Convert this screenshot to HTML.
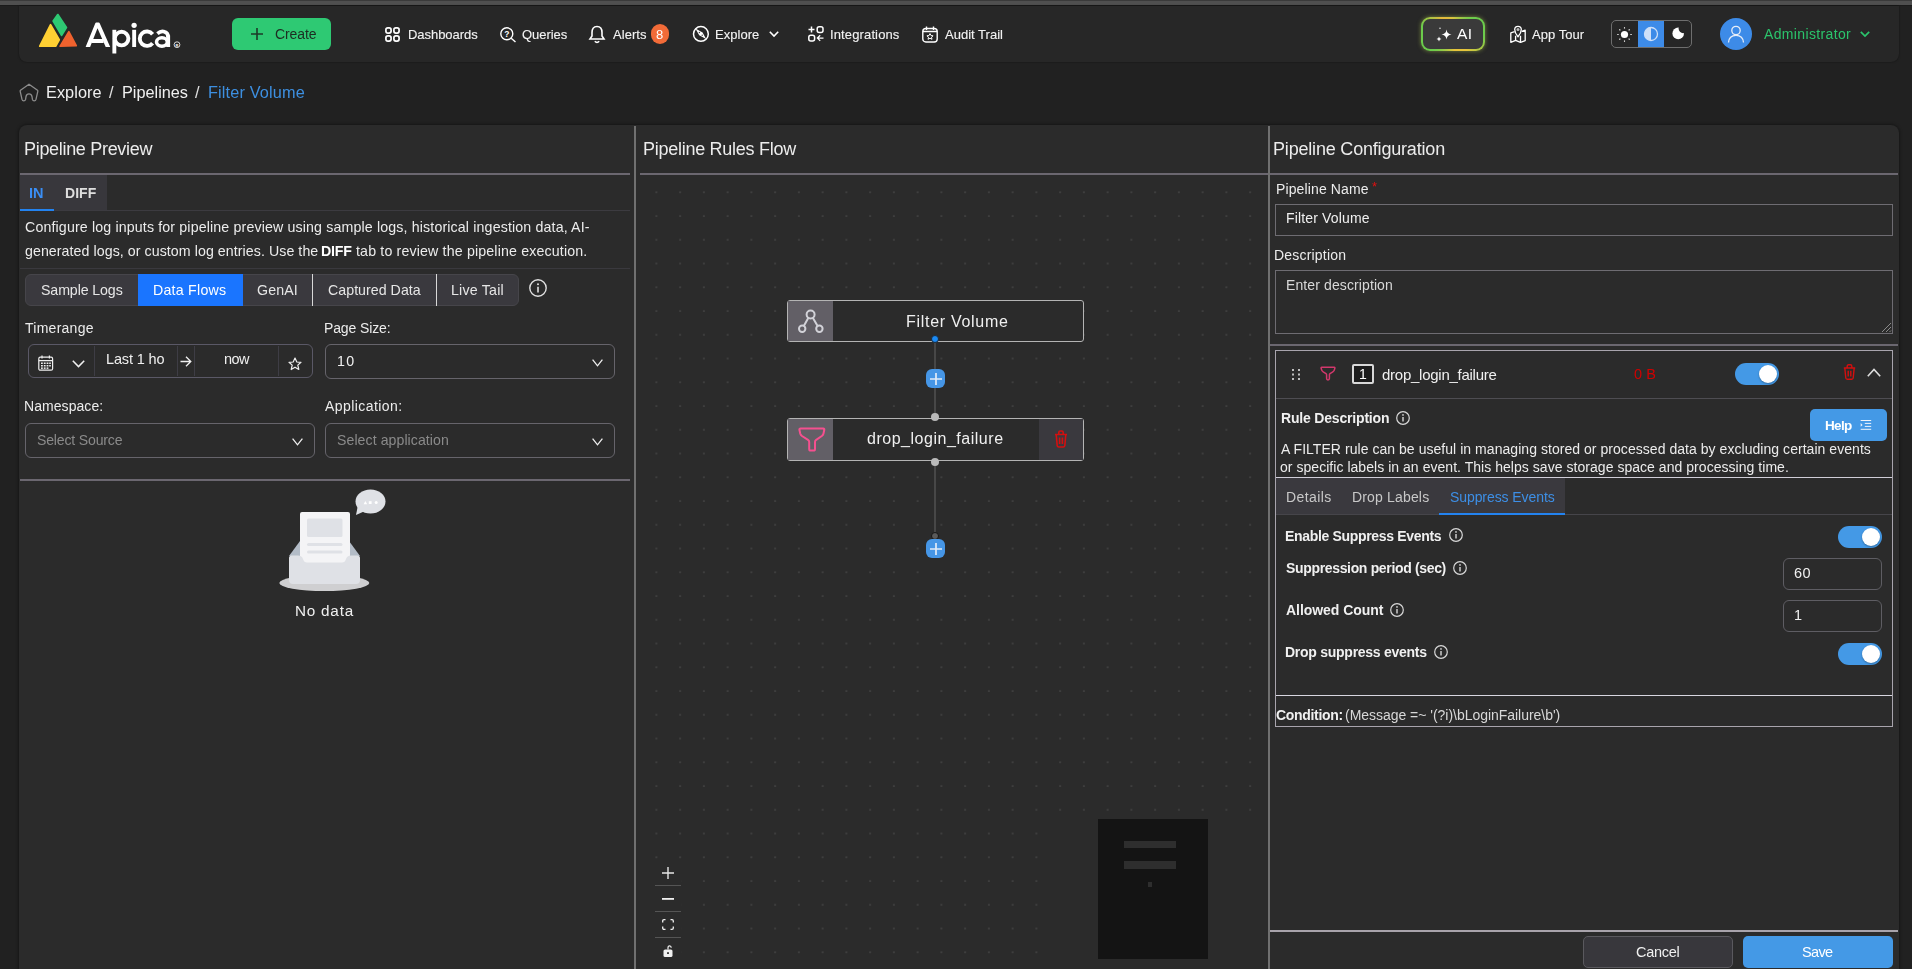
<!DOCTYPE html>
<html><head><meta charset="utf-8"><title>Apica - Pipeline</title>
<style>
html,body{margin:0;padding:0;width:1912px;height:969px;overflow:hidden;background:#212121;}
body{position:relative;font-family:'Liberation Sans', sans-serif;-webkit-font-smoothing:antialiased;}
svg{display:block}
</style></head><body>
<div style="position:absolute;left:0px;top:0px;width:1912px;height:1px;background:#3a3a3a;"></div>
<div style="position:absolute;left:0px;top:1px;width:1912px;height:4px;background:#4f4f4f;"></div>
<div style="position:absolute;left:0px;top:5px;width:1912px;height:1px;background:#1a1a1a;"></div>
<div style="position:absolute;left:19px;top:6px;width:1880px;height:56px;background:#272727;border-radius:0 0 8px 8px;box-shadow:0 0 2px rgba(0,0,0,0.5);"></div>
<svg style="position:absolute;left:38px;top:13px;overflow:visible;" width="40" height="35" viewBox="0 0 40 35">
<path d="M19.8 1.6 L28.4 14.6 L23.6 22.4 L15.2 8 Z" fill="#2ec973" stroke="#2ec973" stroke-width="1.8" stroke-linejoin="round"/>
<path d="M12.5 11.8 L21.2 26.8 L17.6 33.2 L1.8 33.2 Z" fill="#ffd033" stroke="#ffd033" stroke-width="1.8" stroke-linejoin="round"/>
<path d="M30.9 18.8 L38.2 32.6 L22.2 33.2 Z" fill="#f0622e" stroke="#f0622e" stroke-width="1.8" stroke-linejoin="round"/>
</svg>
<svg style="position:absolute;left:80px;top:15px;overflow:visible;" width="105" height="42" viewBox="0 0 105 42">
<g fill="#ffffff" transform="translate(-80,-15)">
<path d="M85.6 47 L95.3 23.2 Q95.6 22.6 96.3 22.6 L98.7 22.6 Q99.4 22.6 99.7 23.2 L110.2 47 L105.7 47 L97.5 28.2 L90.1 47 Z"/>
<rect x="91.6" y="39" width="12" height="4"/>
<rect x="112.4" y="29.8" width="3.9" height="23.7"/>
<rect x="132.2" y="29.8" width="3.9" height="17.2"/>
<circle cx="134.1" cy="25.3" r="2.65"/>
<rect x="166.2" y="35.5" width="3.9" height="11.5"/>
</g>
<g fill="none" stroke="#ffffff" stroke-width="3.9" transform="translate(-80,-15)">
<circle cx="121.6" cy="38.6" r="6.8"/>
<path d="M152.6 34.2 A7.2 7.2 0 1 0 152.6 43.2"/>
<ellipse cx="161.9" cy="42" rx="5.4" ry="4.2" stroke-width="3.5"/>
<path d="M157.4 33.6 Q161 30.6 164.4 31.8 Q168.2 33 168.2 37.2" stroke-width="3.7"/>
<circle cx="177" cy="44.7" r="2.9" stroke-width="0.8"/>
</g>
<text x="97" y="31.6" font-size="4" font-weight="700" fill="#fff" text-anchor="middle" font-family="Liberation Sans">R</text>
</svg>
<div style="position:absolute;left:232px;top:18px;width:99px;height:32px;background:#2ec973;border-radius:6px;"></div>
<svg style="position:absolute;left:251px;top:28px;overflow:visible;" width="12" height="12" viewBox="0 0 12 12"><path d="M6 0V12M0 6H12" stroke="#1c3a28" stroke-width="1.6"/></svg>
<div style="position:absolute;left:274.90px;top:27.45px;white-space:pre;will-change:transform;font-size:14px;line-height:14px;letter-spacing:-0.083px;color:#1d2d22;font-weight:400;">Create</div>
<svg style="position:absolute;left:385px;top:27px;overflow:visible;" width="15" height="15" viewBox="0 0 15 15"><g fill="none" stroke="#fff" stroke-width="1.7"><rect x="0.9" y="0.9" width="5.2" height="5.2" rx="2"/><rect x="8.9" y="0.9" width="5.2" height="5.2" rx="2"/><rect x="0.9" y="8.9" width="5.2" height="5.2" rx="2"/><rect x="8.9" y="8.9" width="5.2" height="5.2" rx="2"/></g></svg>
<div style="position:absolute;left:407.76px;top:28.30px;white-space:pre;will-change:transform;font-size:13px;line-height:13px;letter-spacing:-0.052px;color:#f2f2f2;font-weight:400;-webkit-text-stroke:0.12px #f2f2f2;">Dashboards</div>
<svg style="position:absolute;left:500px;top:27px;overflow:visible;" width="16" height="15" viewBox="0 0 16 15"><g fill="none" stroke="#fff" stroke-width="1.4"><circle cx="6.8" cy="6.8" r="6"/><path d="M11.2 11.2L15.5 15"/></g><text x="6.8" y="9.6" font-size="8.5" font-weight="700" fill="#fff" text-anchor="middle" font-family="Liberation Sans">?</text></svg>
<div style="position:absolute;left:522.08px;top:28.30px;white-space:pre;will-change:transform;font-size:13px;line-height:13px;letter-spacing:-0.035px;color:#f2f2f2;font-weight:400;-webkit-text-stroke:0.12px #f2f2f2;">Queries</div>
<svg style="position:absolute;left:589px;top:25px;overflow:visible;" width="16" height="19" viewBox="0 0 16 19"><g fill="none" stroke="#fff" stroke-width="1.6"><path d="M8 1.5C4.5 1.5 3 4 3 7.5V11L1 14H15L13 11V7.5C13 4 11.5 1.5 8 1.5Z"/><path d="M5.8 16.2Q8 18.6 10.2 16.2"/></g></svg>
<div style="position:absolute;left:612.70px;top:28.30px;white-space:pre;will-change:transform;font-size:13px;line-height:13px;letter-spacing:0.052px;color:#f2f2f2;font-weight:400;-webkit-text-stroke:0.12px #f2f2f2;">Alerts</div>
<div style="position:absolute;left:651px;top:24px;width:18px;height:20px;background:#f26b38;border-radius:10px;"></div>
<div style="position:absolute;left:655.98px;top:28.00px;white-space:pre;will-change:transform;font-size:13px;line-height:13px;letter-spacing:0.000px;color:#ffffff;font-weight:400;">8</div>
<svg style="position:absolute;left:692px;top:25px;overflow:visible;" width="18" height="18" viewBox="0 0 18 18"><circle cx="8.9" cy="8.9" r="7.4" fill="none" stroke="#fff" stroke-width="1.5"/><path d="M3.4 3.6L10.6 7.4L14.1 13.9L7.2 10.2Z" fill="#fff"/><circle cx="7.4" cy="7.5" r="0.7" fill="#444"/><circle cx="10.2" cy="10.3" r="0.7" fill="#444"/></svg>
<div style="position:absolute;left:715.16px;top:28.30px;white-space:pre;will-change:transform;font-size:13px;line-height:13px;letter-spacing:0.039px;color:#f2f2f2;font-weight:400;-webkit-text-stroke:0.12px #f2f2f2;">Explore</div>
<svg style="position:absolute;left:769px;top:31px;overflow:visible;" width="10" height="6" viewBox="0 0 10 6"><path d="M0.8 0.8L5 5L9.2 0.8" fill="none" stroke="#fff" stroke-width="1.6"/></svg>
<svg style="position:absolute;left:808px;top:26px;overflow:visible;" width="16" height="16" viewBox="0 0 16 16"><g fill="none" stroke="#fff" stroke-width="1.5"><path d="M3.5 0.5V6.5M0.5 3.5H6.5"/><rect x="9.2" y="0.8" width="5.8" height="5.8" rx="2"/><rect x="0.8" y="9.2" width="5.8" height="5.8" rx="2"/><path d="M15.5 12.1H9.4M12.2 9.3L9.4 12.1L12.2 14.9" stroke-width="1.3"/></g></svg>
<div style="position:absolute;left:830.23px;top:28.30px;white-space:pre;will-change:transform;font-size:13px;line-height:13px;letter-spacing:0.130px;color:#f2f2f2;font-weight:400;-webkit-text-stroke:0.12px #f2f2f2;">Integrations</div>
<svg style="position:absolute;left:922px;top:26px;overflow:visible;" width="16" height="17" viewBox="0 0 16 17"><g fill="none" stroke="#fff" stroke-width="1.4"><rect x="0.8" y="2.5" width="14.4" height="13.5" rx="3"/><path d="M4.5 0.5V4M11.5 0.5V4M0.8 5.5H15.2"/></g><path d="M8 7.6L9 9.6L11.1 9.8L9.5 11.2L10 13.3L8 12.2L6 13.3L6.5 11.2L4.9 9.8L7 9.6Z" fill="none" stroke="#fff" stroke-width="1"/></svg>
<div style="position:absolute;left:945.00px;top:28.30px;white-space:pre;will-change:transform;font-size:13px;line-height:13px;letter-spacing:0.017px;color:#f2f2f2;font-weight:400;-webkit-text-stroke:0.12px #f2f2f2;">Audit Trail</div>
<div style="position:absolute;left:1421px;top:17px;width:64px;height:34px;border-radius:9px;background:conic-gradient(from 0deg,#d8c440 0deg,#6ccc4c 50deg,#6ccc4c 95deg,#e6c43c 140deg,#e6c43c 175deg,#6ccc4c 230deg,#6ccc4c 285deg,#e6b83c 325deg,#d8c440 360deg);box-shadow:0 0 4px rgba(180,210,80,0.55);"></div>
<div style="position:absolute;left:1423px;top:19px;width:60px;height:30px;background:#3a3a3a;border-radius:7px;"></div>
<svg style="position:absolute;left:1436px;top:27px;overflow:visible;" width="17" height="15" viewBox="0 0 17 15"><path d="M10.5 2.5Q11 7 15.5 7.5Q11 8 10.5 12.5Q10 8 5.5 7.5Q10 7 10.5 2.5Z" fill="#fff"/><path d="M3 9.5Q3.3 11.7 5.5 12Q3.3 12.3 3 14.5Q2.7 12.3 0.5 12Q2.7 11.7 3 9.5Z" fill="#fff"/><circle cx="4" cy="1.2" r="0.7" fill="#fff"/></svg>
<div style="position:absolute;left:1456.80px;top:25.88px;white-space:pre;will-change:transform;font-size:15.5px;line-height:15.5px;letter-spacing:0.317px;color:#ffffff;font-weight:400;">AI</div>
<svg style="position:absolute;left:1510px;top:25px;overflow:visible;" width="16" height="18" viewBox="0 0 16 18"><g fill="none" stroke="#fff" stroke-width="1.3" stroke-linejoin="round"><path d="M4.6 6.6L0.8 7.9V17.3L5.6 15.4L10.5 17.4L15.2 15.6V5.2L11.6 6.4"/><path d="M5.6 10.8V15.4M10.5 10.8V17.4"/><path d="M8 11.8Q4.7 8 4.7 4.6A3.3 3.3 0 0 1 11.3 4.6Q11.3 8 8 11.8Z"/></g><circle cx="8" cy="4.6" r="1.5" fill="#bbb"/></svg>
<div style="position:absolute;left:1532.40px;top:28.00px;white-space:pre;will-change:transform;font-size:13px;line-height:13px;letter-spacing:0.034px;color:#f2f2f2;font-weight:400;-webkit-text-stroke:0.12px #f2f2f2;">App Tour</div>
<div style="position:absolute;left:1611px;top:20px;width:81px;height:28px;border:1px solid #6e6e6e;border-radius:5px;box-sizing:border-box;background:#262626;"></div>
<div style="position:absolute;left:1638px;top:21px;width:26px;height:26px;background:#3d8be8;"></div>
<svg style="position:absolute;left:1617px;top:27px;overflow:visible;" width="15" height="15" viewBox="0 0 15 15"><circle cx="7.5" cy="7.5" r="3.6" fill="#fff"/><g stroke="#fff" stroke-width="1.1"><path d="M7.5 0.3V1.6M7.5 13.4V14.7M0.3 7.5H1.6M13.4 7.5H14.7M2.4 2.4L3.3 3.3M11.7 11.7L12.6 12.6M2.4 12.6L3.3 11.7M11.7 3.3L12.6 2.4"/></g></svg>
<svg style="position:absolute;left:1643px;top:26px;overflow:visible;" width="16" height="16" viewBox="0 0 16 16"><circle cx="8" cy="8" r="6.5" fill="none" stroke="#cfe0f8" stroke-width="1.3"/><path d="M8 1.5A6.5 6.5 0 0 0 8 14.5Z" fill="#cfe0f8"/></svg>
<svg style="position:absolute;left:1672px;top:27px;overflow:visible;" width="13" height="13" viewBox="0 0 13 13"><defs><mask id="mm"><rect x="-1" y="-1" width="15" height="15" fill="#fff"/><circle cx="11.2" cy="1.6" r="4.6" fill="#000"/></mask></defs><circle cx="6.2" cy="6.4" r="5.8" fill="#fff" mask="url(#mm)"/></svg>
<div style="position:absolute;left:1720px;top:18px;width:32px;height:32px;background:#3d8be8;border-radius:50%;"></div>
<svg style="position:absolute;left:1727px;top:25px;overflow:visible;" width="18" height="18" viewBox="0 0 18 18"><g fill="none" stroke="#e8eef8" stroke-width="1.3"><circle cx="9" cy="5.5" r="4.2"/><path d="M1.5 17.5Q2 10.3 9 10.3Q16 10.3 16.5 17.5"/></g></svg>
<div style="position:absolute;left:1764.00px;top:27.15px;white-space:pre;will-change:transform;font-size:14px;line-height:14px;letter-spacing:0.359px;color:#2bc46c;font-weight:400;">Administrator</div>
<svg style="position:absolute;left:1860px;top:31px;overflow:visible;" width="10" height="6" viewBox="0 0 10 6"><path d="M0.8 0.8L5 5L9.2 0.8" fill="none" stroke="#2bc46c" stroke-width="1.7"/></svg>
<svg style="position:absolute;left:19px;top:83px;overflow:visible;" width="20" height="19" viewBox="0 0 20 19"><path d="M10 1.2L18.5 7.2Q19 7.6 18.8 8.4L17 16.4Q16.6 17.8 15.2 17.8Q13.8 17.8 13.4 16.4L13 13.5Q12.4 10.8 10 10.8Q7.6 10.8 7 13.5L6.6 16.4Q6.2 17.8 4.8 17.8Q3.4 17.8 3 16.4L1.2 8.4Q1 7.6 1.5 7.2Z" fill="none" stroke="#8c8c8c" stroke-width="1.3"/></svg>
<div style="position:absolute;left:46.30px;top:84.40px;white-space:pre;will-change:transform;font-size:16.3px;line-height:16.3px;letter-spacing:0.054px;color:#f0f0f0;font-weight:400;">Explore</div>
<div style="position:absolute;left:109.00px;top:84.40px;white-space:pre;will-change:transform;font-size:16.3px;line-height:16.3px;letter-spacing:0.000px;color:#e0e0e0;font-weight:400;">/</div>
<div style="position:absolute;left:121.70px;top:84.40px;white-space:pre;will-change:transform;font-size:16.3px;line-height:16.3px;letter-spacing:-0.007px;color:#f0f0f0;font-weight:400;">Pipelines</div>
<div style="position:absolute;left:195.00px;top:84.40px;white-space:pre;will-change:transform;font-size:16.3px;line-height:16.3px;letter-spacing:0.000px;color:#e0e0e0;font-weight:400;">/</div>
<div style="position:absolute;left:207.50px;top:84.40px;white-space:pre;will-change:transform;font-size:16.3px;line-height:16.3px;letter-spacing:0.140px;color:#3d8fe0;font-weight:400;">Filter Volume</div>
<div style="position:absolute;left:19px;top:125px;width:1880px;height:844px;background:#2b2b2b;border-radius:8px 8px 0 0;box-shadow:0 0 3px 1px rgba(0,0,0,0.35);"></div>
<div style="position:absolute;left:23.86px;top:139.86px;white-space:pre;will-change:transform;font-size:18px;line-height:18px;letter-spacing:-0.311px;color:#ececec;font-weight:400;">Pipeline Preview</div>
<div style="position:absolute;left:20px;top:173px;width:610px;height:2px;background:#6b6770;"></div>
<div style="position:absolute;left:634px;top:126px;width:2px;height:843px;background:#707070;"></div>
<div style="position:absolute;left:20px;top:175px;width:87px;height:35px;background:#38373c;"></div>
<div style="position:absolute;left:20px;top:210px;width:610px;height:1px;background:#3c3b40;"></div>
<div style="position:absolute;left:20px;top:209px;width:34px;height:2px;background:#2383f0;"></div>
<div style="position:absolute;left:29.43px;top:186.03px;white-space:pre;will-change:transform;font-size:14.5px;line-height:14.5px;letter-spacing:0.000px;color:#3a8ef5;font-weight:700;">IN</div>
<div style="position:absolute;left:65.16px;top:186.45px;white-space:pre;will-change:transform;font-size:14px;line-height:14px;letter-spacing:0.056px;color:#dedede;font-weight:700;">DIFF</div>
<div style="position:absolute;left:24.69px;top:219.78px;white-space:pre;will-change:transform;font-size:14.2px;line-height:14.2px;letter-spacing:0.147px;color:#ececec;font-weight:400;">Configure log inputs for pipeline preview using sample logs, historical ingestion data, AI-</div>
<div style="position:absolute;left:24.83px;top:243.98px;white-space:pre;will-change:transform;font-size:14.2px;line-height:14.2px;letter-spacing:0.067px;color:#ececec;font-weight:400;">generated logs, or custom log entries. Use the</div>
<div style="position:absolute;left:321.35px;top:243.98px;white-space:pre;will-change:transform;font-size:14.2px;line-height:14.2px;letter-spacing:-0.186px;color:#ffffff;font-weight:700;">DIFF</div>
<div style="position:absolute;left:356.36px;top:243.98px;white-space:pre;will-change:transform;font-size:14.2px;line-height:14.2px;letter-spacing:0.159px;color:#ececec;font-weight:400;">tab to review the pipeline execution.</div>
<div style="position:absolute;left:20px;top:268px;width:610px;height:1px;background:#3a393e;"></div>
<div style="position:absolute;left:25px;top:274px;width:494px;height:32px;background:#3a393e;border-radius:6px;border:1px solid #46454a;box-sizing:border-box;"></div>
<div style="position:absolute;left:138px;top:274px;width:105px;height:32px;background:#1a75ff;"></div>
<div style="position:absolute;left:312px;top:274px;width:1px;height:32px;background:#d8d8d8;"></div>
<div style="position:absolute;left:436px;top:274px;width:1px;height:32px;background:#d8d8d8;"></div>
<div style="position:absolute;left:41.03px;top:283.38px;white-space:pre;will-change:transform;font-size:14.2px;line-height:14.2px;letter-spacing:-0.109px;color:#e6e6e6;font-weight:400;">Sample Logs</div>
<div style="position:absolute;left:153.46px;top:283.38px;white-space:pre;will-change:transform;font-size:14.2px;line-height:14.2px;letter-spacing:0.238px;color:#ffffff;font-weight:400;">Data Flows</div>
<div style="position:absolute;left:257.29px;top:283.38px;white-space:pre;will-change:transform;font-size:14.2px;line-height:14.2px;letter-spacing:0.125px;color:#e6e6e6;font-weight:400;">GenAI</div>
<div style="position:absolute;left:327.69px;top:283.38px;white-space:pre;will-change:transform;font-size:14.2px;line-height:14.2px;letter-spacing:0.033px;color:#e6e6e6;font-weight:400;">Captured Data</div>
<div style="position:absolute;left:450.86px;top:283.38px;white-space:pre;will-change:transform;font-size:14.2px;line-height:14.2px;letter-spacing:0.215px;color:#e6e6e6;font-weight:400;">Live Tail</div>
<svg style="position:absolute;left:529px;top:279px;overflow:visible;" width="18" height="18" viewBox="0 0 18 18"><circle cx="9" cy="9" r="8.2" fill="none" stroke="#e0e0e0" stroke-width="1.4"/><path d="M9 7.8V13.4" stroke="#e0e0e0" stroke-width="1.6"/><circle cx="9" cy="5.2" r="1" fill="#e0e0e0"/></svg>
<div style="position:absolute;left:25.12px;top:320.75px;white-space:pre;will-change:transform;font-size:14px;line-height:14px;letter-spacing:0.261px;color:#ececec;font-weight:400;">Timerange</div>
<div style="position:absolute;left:28px;top:344px;width:285px;height:34px;border:1px solid #5a5866;border-radius:6px;box-sizing:border-box;"></div>
<div style="position:absolute;left:94px;top:346px;width:1px;height:30px;background:#3e3d45;"></div>
<div style="position:absolute;left:177px;top:346px;width:1px;height:30px;background:#3e3d45;"></div>
<div style="position:absolute;left:194px;top:346px;width:1px;height:30px;background:#3e3d45;"></div>
<div style="position:absolute;left:278px;top:346px;width:1px;height:30px;background:#3e3d45;"></div>
<svg style="position:absolute;left:38px;top:355px;overflow:visible;" width="16" height="16" viewBox="0 0 16 16"><g fill="none" stroke="#f0f0f0" stroke-width="1.2"><rect x="0.8" y="2.2" width="13.8" height="13" rx="1.5"/><path d="M0.8 5.6H14.6M4 0.5V3.5M11.4 0.5V3.5"/></g><g fill="#f0f0f0"><rect x="3" y="7.5" width="1.8" height="1.5"/><rect x="5.8" y="7.5" width="1.8" height="1.5"/><rect x="8.6" y="7.5" width="1.8" height="1.5"/><rect x="11.2" y="7.5" width="1.6" height="1.5"/><rect x="3" y="10" width="1.8" height="1.5"/><rect x="5.8" y="10" width="1.8" height="1.5"/><rect x="8.6" y="10" width="1.8" height="1.5"/><rect x="11.2" y="10" width="1.6" height="1.5"/><rect x="3" y="12.4" width="1.8" height="1.5"/><rect x="5.8" y="12.4" width="1.8" height="1.5"/><rect x="8.6" y="12.4" width="1.8" height="1.5"/></g></svg>
<svg style="position:absolute;left:72px;top:360px;overflow:visible;" width="13" height="8" viewBox="0 0 13 8"><path d="M0.8 0.8L6.5 6.6L12.2 0.8" fill="none" stroke="#f0f0f0" stroke-width="1.5"/></svg>
<div style="position:absolute;left:106.24px;top:351.63px;white-space:pre;will-change:transform;font-size:14.5px;line-height:14.5px;letter-spacing:-0.134px;color:#f0f0f0;font-weight:400;">Last 1 ho</div>
<svg style="position:absolute;left:180px;top:356px;overflow:visible;" width="12" height="11" viewBox="0 0 12 11"><path d="M0.5 5.5H10.8M6 0.8L10.8 5.5L6 10.2" fill="none" stroke="#f0f0f0" stroke-width="1.3"/></svg>
<div style="position:absolute;left:223.63px;top:351.63px;white-space:pre;will-change:transform;font-size:14.5px;line-height:14.5px;letter-spacing:-0.622px;color:#f0f0f0;font-weight:400;">now</div>
<svg style="position:absolute;left:288px;top:357px;overflow:visible;" width="14" height="14" viewBox="0 0 14 14"><path d="M7 1L8.8 5L13 5.3L9.8 8.1L10.8 12.5L7 10.2L3.2 12.5L4.2 8.1L1 5.3L5.2 5Z" fill="none" stroke="#f0f0f0" stroke-width="1.2" stroke-linejoin="round"/></svg>
<div style="position:absolute;left:324.28px;top:320.75px;white-space:pre;will-change:transform;font-size:14px;line-height:14px;letter-spacing:-0.129px;color:#ececec;font-weight:400;">Page Size:</div>
<div style="position:absolute;left:325px;top:344px;width:290px;height:35px;border:1px solid #66646b;border-radius:6px;box-sizing:border-box;"></div>
<div style="position:absolute;left:336.71px;top:353.98px;white-space:pre;will-change:transform;font-size:14.2px;line-height:14.2px;letter-spacing:1.313px;color:#f0f0f0;font-weight:400;">10</div>
<svg style="position:absolute;left:592px;top:359px;overflow:visible;" width="11" height="8" viewBox="0 0 11 8"><path d="M0.6 0.6L5.5 6.8L10.4 0.6" fill="none" stroke="#f0f0f0" stroke-width="1.3"/></svg>
<div style="position:absolute;left:24.28px;top:399.15px;white-space:pre;will-change:transform;font-size:14px;line-height:14px;letter-spacing:0.062px;color:#ececec;font-weight:400;">Namespace:</div>
<div style="position:absolute;left:25px;top:423px;width:290px;height:35px;border:1px solid #66646b;border-radius:6px;box-sizing:border-box;"></div>
<div style="position:absolute;left:36.84px;top:432.96px;white-space:pre;will-change:transform;font-size:14.1px;line-height:14.1px;letter-spacing:-0.184px;color:#8a8a8a;font-weight:400;">Select Source</div>
<svg style="position:absolute;left:292px;top:438px;overflow:visible;" width="11" height="8" viewBox="0 0 11 8"><path d="M0.6 0.6L5.5 6.8L10.4 0.6" fill="none" stroke="#f0f0f0" stroke-width="1.3"/></svg>
<div style="position:absolute;left:325.40px;top:399.15px;white-space:pre;will-change:transform;font-size:14px;line-height:14px;letter-spacing:0.432px;color:#ececec;font-weight:400;">Application:</div>
<div style="position:absolute;left:325px;top:423px;width:290px;height:35px;border:1px solid #66646b;border-radius:6px;box-sizing:border-box;"></div>
<div style="position:absolute;left:336.84px;top:432.96px;white-space:pre;will-change:transform;font-size:14.1px;line-height:14.1px;letter-spacing:0.079px;color:#8a8a8a;font-weight:400;">Select application</div>
<svg style="position:absolute;left:592px;top:438px;overflow:visible;" width="11" height="8" viewBox="0 0 11 8"><path d="M0.6 0.6L5.5 6.8L10.4 0.6" fill="none" stroke="#f0f0f0" stroke-width="1.3"/></svg>
<div style="position:absolute;left:20px;top:479px;width:610px;height:2px;background:#6b6770;"></div>
<svg style="position:absolute;left:279px;top:490px;overflow:visible;" width="108" height="102" viewBox="0 0 108 102">
<ellipse cx="45.3" cy="93" rx="45" ry="8" fill="#cfcfd1"/>
<path d="M10 66 L21 51 L70 51 L81 66 Z" fill="#b3bcc7"/>
<rect x="21" y="22" width="50" height="52" rx="2" fill="#f4f4f6"/>
<rect x="28" y="28.5" width="35.5" height="18.5" rx="1.5" fill="#dfe1e6"/>
<rect x="28" y="53" width="35.5" height="3" rx="1.5" fill="#dfe1e6"/>
<rect x="28" y="60.5" width="35.5" height="3" rx="1.5" fill="#dfe1e6"/>
<path d="M10 68 Q10 65.5 12.5 65.5 L19 65.5 Q23 65.5 24 69 Q25 72.5 28 72.5 L63 72.5 Q66 72.5 67 69 Q68 65.5 72 65.5 L78.5 65.5 Q81 65.5 81 68 L81 90 Q81 94 77 94 L14 94 Q10 94 10 90 Z" fill="#dfe1e6"/>
<ellipse cx="91.5" cy="11.5" rx="15" ry="12" fill="#dfe1e6"/>
<path d="M79 15 L77 25 L86 21 Z" fill="#dfe1e6"/>
<path d="M84.6 14.2 L86.4 11 L88.2 14.2 Z" fill="#ffffff"/>
<rect x="89.8" y="11.2" width="2.8" height="2.8" fill="#ffffff"/>
<circle cx="97.2" cy="12.6" r="1.5" fill="#ffffff"/>
</svg>
<div style="position:absolute;left:294.78px;top:602.65px;white-space:pre;will-change:transform;font-size:15.3px;line-height:15.3px;letter-spacing:0.763px;color:#f0f0f0;font-weight:400;">No data</div>
<div style="position:absolute;left:643.46px;top:139.86px;white-space:pre;will-change:transform;font-size:18px;line-height:18px;letter-spacing:-0.271px;color:#ececec;font-weight:400;">Pipeline Rules Flow</div>
<div style="position:absolute;left:640px;top:173px;width:628px;height:2px;background:#6b6770;"></div>
<svg style="position:absolute;left:636px;top:175px;" width="632" height="794"><defs><pattern id="dots" x="8.52" y="5.32" width="23.75" height="23.75" patternUnits="userSpaceOnUse"><circle cx="11.875" cy="11.875" r="0.6" fill="#777777"/></pattern></defs><rect width="632" height="794" fill="url(#dots)"/></svg>
<div style="position:absolute;left:1053px;top:813px;width:215px;height:156px;background:#2b2b2b;"></div>
<div style="position:absolute;left:1098px;top:819px;width:110px;height:140px;background:#141414;"></div>
<div style="position:absolute;left:1124px;top:840.5px;width:52px;height:7.5px;background:#2e2e2e;"></div>
<div style="position:absolute;left:1124px;top:861px;width:52px;height:7.7px;background:#2e2e2e;"></div>
<div style="position:absolute;left:1147.6px;top:882px;width:4.7px;height:4.5px;background:#2e2e2e;"></div>
<div style="position:absolute;left:655px;top:860px;width:26px;height:104px;background:#2b2b2b;"></div>
<div style="position:absolute;left:655px;top:885px;width:26px;height:1px;background:#555;"></div>
<div style="position:absolute;left:655px;top:911px;width:26px;height:1px;background:#555;"></div>
<div style="position:absolute;left:655px;top:937px;width:26px;height:1px;background:#555;"></div>
<svg style="position:absolute;left:662px;top:867px;overflow:visible;" width="12" height="12" viewBox="0 0 12 12"><path d="M6 0V12M0 6H12" stroke="#e6e6e6" stroke-width="1.4"/></svg>
<svg style="position:absolute;left:662px;top:898px;overflow:visible;" width="12" height="2" viewBox="0 0 12 2"><rect x="0" y="0" width="12" height="1.8" fill="#f0f0f0"/></svg>
<svg style="position:absolute;left:662px;top:919px;overflow:visible;" width="12" height="11" viewBox="0 0 12 11"><g fill="none" stroke="#f0f0f0" stroke-width="1.3"><path d="M0.7 3.5V2Q0.7 0.7 2 0.7H3.5M8.5 0.7H10Q11.3 0.7 11.3 2V3.5M11.3 7.5V9Q11.3 10.3 10 10.3H8.5M3.5 10.3H2Q0.7 10.3 0.7 9V7.5"/></g></svg>
<svg style="position:absolute;left:663px;top:945px;overflow:visible;" width="10" height="12" viewBox="0 0 10 12"><path d="M5 4.5V2.8Q5 0.8 6.6 0.8Q8.2 0.8 8.2 2.8" fill="none" stroke="#f0f0f0" stroke-width="1.2"/><rect x="0.5" y="4.5" width="9" height="7.5" rx="1.6" fill="#f0f0f0"/><rect x="4.1" y="7.2" width="1.8" height="1.8" fill="#2b2b2b"/></svg>
<div style="position:absolute;left:934.4px;top:340px;width:2px;height:78px;background:#474747;"></div>
<div style="position:absolute;left:934.4px;top:462px;width:2px;height:78px;background:#474747;"></div>
<div style="position:absolute;left:787px;top:300px;width:297px;height:42px;background:#2b2b2b;border:1px solid #b4b4b4;border-radius:3px;box-sizing:border-box;"></div>
<div style="position:absolute;left:788px;top:301px;width:45px;height:40px;background:#625f66;"></div>
<svg style="position:absolute;left:798px;top:306px;overflow:visible;" width="26" height="27" viewBox="0 0 26 27"><g fill="none" stroke="#d2d2d8" stroke-width="2"><circle cx="12.6" cy="8.5" r="4"/><circle cx="4.2" cy="22.8" r="3.2"/><circle cx="21.4" cy="22.8" r="3.2"/><path d="M10.4 11.8L5.8 20M14.8 11.8L19.6 20"/></g></svg>
<div style="position:absolute;left:905.92px;top:313.56px;white-space:pre;will-change:transform;font-size:16px;line-height:16px;letter-spacing:0.708px;color:#f0f0f0;font-weight:400;">Filter Volume</div>
<div style="position:absolute;left:931px;top:334.8px;width:8px;height:8px;border-radius:50%;background:#1a8af5;border:1px solid #1b2a3a;box-sizing:border-box;"></div>
<div style="position:absolute;left:926px;top:369px;width:19px;height:19px;background:#4696e6;border-radius:6px;"></div>
<svg style="position:absolute;left:929.5px;top:372.5px;overflow:visible;" width="12" height="12" viewBox="0 0 12 12"><path d="M6 0V12M0 6H12" stroke="#e2ecf7" stroke-width="1.7"/></svg>
<div style="position:absolute;left:787px;top:418px;width:297px;height:43px;background:#2b2b2b;border:1px solid #b4b4b4;border-radius:3px;box-sizing:border-box;"></div>
<div style="position:absolute;left:788px;top:419px;width:45px;height:41px;background:#625f66;"></div>
<div style="position:absolute;left:1039px;top:419px;width:44px;height:41px;background:#3a393e;"></div>
<svg style="position:absolute;left:798px;top:427px;overflow:visible;" width="28" height="25" viewBox="0 0 28 25"><path d="M2.5 1.5H25.3Q26.5 1.5 26.3 2.8L25.5 6.5Q25.2 8 23.8 9L18.2 12.8Q17 13.6 17 15V22Q17 23.6 15.5 23.6L12.6 23.6Q11.2 23.6 11.2 22V15Q11.2 13.6 10 12.8L4 9Q2.6 8 2.2 6.5L1.4 2.8Q1.2 1.5 2.5 1.5Z" fill="none" stroke="#f5508f" stroke-width="2"/></svg>
<div style="position:absolute;left:867.06px;top:431.46px;white-space:pre;will-change:transform;font-size:16px;line-height:16px;letter-spacing:0.519px;color:#f0f0f0;font-weight:400;">drop_login_failure</div>
<svg style="position:absolute;left:1054px;top:430px;overflow:visible;" width="14" height="18" viewBox="0 0 14 18"><g fill="none" stroke="#d40f0f" stroke-width="1.6"><path d="M1 4.5H13M4.8 4.5V2.4Q4.8 1 6.2 1H7.8Q9.2 1 9.2 2.4V4.5"/><path d="M2.2 4.5L3.2 15.6Q3.4 17 4.8 17H9.2Q10.6 17 10.8 15.6L11.8 4.5"/><path d="M5.6 7.5V14M8.4 7.5V14"/></g></svg>
<div style="position:absolute;left:931px;top:413px;width:8px;height:8px;border-radius:50%;background:#b9b9b9;"></div>
<div style="position:absolute;left:931px;top:458.4px;width:8px;height:8px;border-radius:50%;background:#b9b9b9;"></div>
<div style="position:absolute;left:931px;top:532.2px;width:8px;height:8px;border-radius:50%;background:#5a5a5a;border:1px solid #151515;box-sizing:border-box;"></div>
<div style="position:absolute;left:926px;top:539px;width:19px;height:19px;background:#4696e6;border-radius:6px;"></div>
<svg style="position:absolute;left:929.5px;top:542.5px;overflow:visible;" width="12" height="12" viewBox="0 0 12 12"><path d="M6 0V12M0 6H12" stroke="#e2ecf7" stroke-width="1.7"/></svg>
<div style="position:absolute;left:1268px;top:126px;width:2px;height:843px;background:#707070;"></div>
<div style="position:absolute;left:1273.46px;top:139.86px;white-space:pre;will-change:transform;font-size:18px;line-height:18px;letter-spacing:-0.189px;color:#ececec;font-weight:400;">Pipeline Configuration</div>
<div style="position:absolute;left:1270px;top:173px;width:628px;height:2px;background:#6b6770;"></div>
<div style="position:absolute;left:1275.98px;top:182.05px;white-space:pre;will-change:transform;font-size:14px;line-height:14px;letter-spacing:0.123px;color:#ececec;font-weight:400;">Pipeline Name</div>
<div style="position:absolute;left:1372.27px;top:179.50px;white-space:pre;will-change:transform;font-size:13px;line-height:13px;letter-spacing:0.000px;color:#e01010;font-weight:400;">*</div>
<div style="position:absolute;left:1275px;top:204px;width:618px;height:32px;border:1px solid #6e6c72;box-sizing:border-box;"></div>
<div style="position:absolute;left:1285.88px;top:211.35px;white-space:pre;will-change:transform;font-size:14px;line-height:14px;letter-spacing:0.152px;color:#f0f0f0;font-weight:400;">Filter Volume</div>
<div style="position:absolute;left:1274.28px;top:248.25px;white-space:pre;will-change:transform;font-size:14px;line-height:14px;letter-spacing:0.198px;color:#ececec;font-weight:400;">Description</div>
<div style="position:absolute;left:1275px;top:270px;width:618px;height:64px;border:1px solid #6e6c72;box-sizing:border-box;"></div>
<div style="position:absolute;left:1286.18px;top:278.05px;white-space:pre;will-change:transform;font-size:14px;line-height:14px;letter-spacing:0.109px;color:#d8d8d8;font-weight:400;">Enter description</div>
<svg style="position:absolute;left:1880px;top:321px;overflow:visible;" width="12" height="12" viewBox="0 0 12 12"><path d="M11 2L2 11M11 6L6 11M11 9.5L9.5 11" stroke="#8a8a8a" stroke-width="1"/></svg>
<div style="position:absolute;left:1270px;top:344px;width:628px;height:2px;background:#6b6770;"></div>
<div style="position:absolute;left:1275px;top:350px;width:618px;height:377px;border:1px solid #a8a4ad;box-sizing:border-box;"></div>
<svg style="position:absolute;left:1292px;top:369px;overflow:visible;" width="8" height="11" viewBox="0 0 8 11"><g fill="#bdbdbd"><rect x="0" y="0" width="2" height="2"/><rect x="6" y="0" width="2" height="2"/><rect x="0" y="4.5" width="2" height="2"/><rect x="6" y="4.5" width="2" height="2"/><rect x="0" y="9" width="2" height="2"/><rect x="6" y="9" width="2" height="2"/></g></svg>
<svg style="position:absolute;left:1320px;top:366px;overflow:visible;" width="16" height="15" viewBox="0 0 16 15"><path d="M1.8 1.2H14.2Q15.2 1.2 14.8 2.6L14.2 4.2Q13.8 5.2 12.8 5.8L10 7.6Q9.4 8 9.4 8.8V12.6Q9.4 14 8 14Q6.6 14 6.6 12.6V8.8Q6.6 8 6 7.6L3.2 5.8Q2.2 5.2 1.8 4.2L1.2 2.6Q0.8 1.2 1.8 1.2Z" fill="none" stroke="#d2386c" stroke-width="1.5"/></svg>
<div style="position:absolute;left:1352px;top:364px;width:22px;height:20px;border:2px solid #d8d8d8;border-radius:2px;box-sizing:border-box;background:#1c1c1c;"></div>
<div style="position:absolute;left:1359.02px;top:367.45px;white-space:pre;will-change:transform;font-size:14px;line-height:14px;letter-spacing:0.000px;color:#ffffff;font-weight:400;">1</div>
<div style="position:absolute;left:1381.70px;top:366.60px;white-space:pre;will-change:transform;font-size:15px;line-height:15px;letter-spacing:-0.259px;color:#f0f0f0;font-weight:400;">drop_login_failure</div>
<div style="position:absolute;left:1634.47px;top:367.03px;white-space:pre;will-change:transform;font-size:14.5px;line-height:14.5px;letter-spacing:0.126px;color:#d00000;font-weight:400;">0 B</div>
<div style="position:absolute;left:1735px;top:363px;width:44px;height:22px;background:#4499e6;border-radius:11px;"></div>
<div style="position:absolute;left:1759px;top:365px;width:18px;height:18px;background:#ffffff;border-radius:50%;box-shadow:0 1px 2px rgba(0,0,0,0.3);"></div>
<svg style="position:absolute;left:1843px;top:364px;overflow:visible;" width="13" height="16" viewBox="0 0 13 16"><g fill="none" stroke="#d40f0f" stroke-width="1.4"><path d="M0.8 4H12.2M4.2 4V2.2Q4.2 0.8 5.6 0.8H7.4Q8.8 0.8 8.8 2.2V4"/><path d="M1.8 4L2.8 14Q3 15.2 4.2 15.2H8.8Q10 15.2 10.2 14L11.2 4"/><path d="M5.2 6.8V12.6M7.8 6.8V12.6"/></g></svg>
<svg style="position:absolute;left:1867px;top:368px;overflow:visible;" width="14" height="9" viewBox="0 0 14 9"><path d="M0.8 8.2L7 1.5L13.2 8.2" fill="none" stroke="#dedede" stroke-width="1.6"/></svg>
<div style="position:absolute;left:1276px;top:398px;width:616px;height:1px;background:#4e4d52;"></div>
<div style="position:absolute;left:1280.56px;top:410.95px;white-space:pre;will-change:transform;font-size:14px;line-height:14px;letter-spacing:-0.183px;color:#f0f0f0;font-weight:700;">Rule Description</div>
<svg style="position:absolute;left:1396px;top:411px;overflow:visible;" width="14" height="14" viewBox="0 0 14 14"><circle cx="7" cy="7" r="6.3" fill="none" stroke="#d8d8d8" stroke-width="1.2"/><path d="M7 6V10.6" stroke="#d8d8d8" stroke-width="1.4"/><circle cx="7" cy="3.9" r="0.85" fill="#d8d8d8"/></svg>
<div style="position:absolute;left:1810px;top:409px;width:77px;height:32px;background:#4499e6;border-radius:5px;"></div>
<div style="position:absolute;left:1824.89px;top:418.57px;white-space:pre;will-change:transform;font-size:13.5px;line-height:13.5px;letter-spacing:-0.664px;color:#ffffff;font-weight:700;">Help</div>
<svg style="position:absolute;left:1860px;top:419px;overflow:visible;" width="12" height="12" viewBox="0 0 12 12"><g stroke="#eef4fc" stroke-width="1"><path d="M0.7 1.5H11.2M4.8 4.4H11.2M4.8 7.4H11.2M0.7 10.3H11.2"/></g><path d="M0.7 4L2.6 5.9L0.7 7.8Z" fill="#eef4fc"/></svg>
<div style="position:absolute;left:1281.00px;top:442.25px;white-space:pre;will-change:transform;font-size:14px;line-height:14px;letter-spacing:0.045px;color:#ececec;font-weight:400;">A FILTER rule can be useful in managing stored or processed data by excluding certain events</div>
<div style="position:absolute;left:1280.44px;top:460.35px;white-space:pre;will-change:transform;font-size:14px;line-height:14px;letter-spacing:0.040px;color:#ececec;font-weight:400;">or specific labels in an event. This helps save storage space and processing time.</div>
<div style="position:absolute;left:1276px;top:477px;width:616px;height:1px;background:#d0ced8;"></div>
<div style="position:absolute;left:1276px;top:478px;width:289px;height:36px;background:#3a393e;"></div>
<div style="position:absolute;left:1276px;top:514px;width:616px;height:1px;background:#46454a;"></div>
<div style="position:absolute;left:1439px;top:513px;width:126px;height:2px;background:#2383f0;"></div>
<div style="position:absolute;left:1286.08px;top:489.95px;white-space:pre;will-change:transform;font-size:14px;line-height:14px;letter-spacing:0.391px;color:#c8c8c8;font-weight:400;">Details</div>
<div style="position:absolute;left:1352.28px;top:489.95px;white-space:pre;will-change:transform;font-size:14px;line-height:14px;letter-spacing:0.165px;color:#c8c8c8;font-weight:400;">Drop Labels</div>
<div style="position:absolute;left:1450.24px;top:489.95px;white-space:pre;will-change:transform;font-size:14px;line-height:14px;letter-spacing:-0.082px;color:#3d8fe6;font-weight:400;">Suppress Events</div>
<div style="position:absolute;left:1285.16px;top:528.95px;white-space:pre;will-change:transform;font-size:14px;line-height:14px;letter-spacing:-0.326px;color:#f0f0f0;font-weight:700;">Enable Suppress Events</div>
<svg style="position:absolute;left:1449px;top:528px;overflow:visible;" width="14" height="14" viewBox="0 0 14 14"><circle cx="7" cy="7" r="6.3" fill="none" stroke="#d8d8d8" stroke-width="1.2"/><path d="M7 6V10.6" stroke="#d8d8d8" stroke-width="1.4"/><circle cx="7" cy="3.9" r="0.85" fill="#d8d8d8"/></svg>
<div style="position:absolute;left:1838px;top:526px;width:44px;height:22px;background:#4499e6;border-radius:11px;"></div>
<div style="position:absolute;left:1862px;top:528px;width:18px;height:18px;background:#ffffff;border-radius:50%;box-shadow:0 1px 2px rgba(0,0,0,0.3);"></div>
<div style="position:absolute;left:1285.72px;top:561.15px;white-space:pre;will-change:transform;font-size:14px;line-height:14px;letter-spacing:-0.337px;color:#f0f0f0;font-weight:700;">Suppression period (sec)</div>
<svg style="position:absolute;left:1453px;top:561px;overflow:visible;" width="14" height="14" viewBox="0 0 14 14"><circle cx="7" cy="7" r="6.3" fill="none" stroke="#d8d8d8" stroke-width="1.2"/><path d="M7 6V10.6" stroke="#d8d8d8" stroke-width="1.4"/><circle cx="7" cy="3.9" r="0.85" fill="#d8d8d8"/></svg>
<div style="position:absolute;left:1783px;top:558px;width:99px;height:32px;border:1px solid #5e5d63;border-radius:6px;box-sizing:border-box;"></div>
<div style="position:absolute;left:1794.28px;top:565.73px;white-space:pre;will-change:transform;font-size:14.5px;line-height:14.5px;letter-spacing:0.421px;color:#f0f0f0;font-weight:400;">60</div>
<div style="position:absolute;left:1285.72px;top:603.25px;white-space:pre;will-change:transform;font-size:14px;line-height:14px;letter-spacing:-0.047px;color:#f0f0f0;font-weight:700;">Allowed Count</div>
<svg style="position:absolute;left:1390px;top:603px;overflow:visible;" width="14" height="14" viewBox="0 0 14 14"><circle cx="7" cy="7" r="6.3" fill="none" stroke="#d8d8d8" stroke-width="1.2"/><path d="M7 6V10.6" stroke="#d8d8d8" stroke-width="1.4"/><circle cx="7" cy="3.9" r="0.85" fill="#d8d8d8"/></svg>
<div style="position:absolute;left:1783px;top:600px;width:99px;height:32px;border:1px solid #5e5d63;border-radius:6px;box-sizing:border-box;"></div>
<div style="position:absolute;left:1794.48px;top:607.73px;white-space:pre;will-change:transform;font-size:14.5px;line-height:14.5px;letter-spacing:0.000px;color:#f0f0f0;font-weight:400;">1</div>
<div style="position:absolute;left:1285.16px;top:645.15px;white-space:pre;will-change:transform;font-size:14px;line-height:14px;letter-spacing:-0.263px;color:#f0f0f0;font-weight:700;">Drop suppress events</div>
<svg style="position:absolute;left:1434px;top:645px;overflow:visible;" width="14" height="14" viewBox="0 0 14 14"><circle cx="7" cy="7" r="6.3" fill="none" stroke="#d8d8d8" stroke-width="1.2"/><path d="M7 6V10.6" stroke="#d8d8d8" stroke-width="1.4"/><circle cx="7" cy="3.9" r="0.85" fill="#d8d8d8"/></svg>
<div style="position:absolute;left:1838px;top:643px;width:44px;height:22px;background:#4499e6;border-radius:11px;"></div>
<div style="position:absolute;left:1862px;top:645px;width:18px;height:18px;background:#ffffff;border-radius:50%;box-shadow:0 1px 2px rgba(0,0,0,0.3);"></div>
<div style="position:absolute;left:1276px;top:695px;width:616px;height:1px;background:#d8d6e0;"></div>
<div style="position:absolute;left:1275.84px;top:708.35px;white-space:pre;will-change:transform;font-size:14px;line-height:14px;letter-spacing:-0.323px;color:#f0f0f0;font-weight:700;">Condition:</div>
<div style="position:absolute;left:1345.46px;top:708.35px;white-space:pre;will-change:transform;font-size:14px;line-height:14px;letter-spacing:-0.028px;color:#d8d8d8;font-weight:400;">(Message =~ '(?i)\bLoginFailure\b')</div>
<div style="position:absolute;left:1270px;top:930px;width:628px;height:2px;background:#a8a3ab;"></div>
<div style="position:absolute;left:1583px;top:936px;width:150px;height:32px;background:#38373c;border:1px solid #5a595e;border-radius:5px;box-sizing:border-box;"></div>
<div style="position:absolute;left:1635.98px;top:944.73px;white-space:pre;will-change:transform;font-size:14.5px;line-height:14.5px;letter-spacing:-0.302px;color:#f0f0f0;font-weight:400;">Cancel</div>
<div style="position:absolute;left:1743px;top:936px;width:150px;height:32px;background:#4499e6;border-radius:5px;"></div>
<div style="position:absolute;left:1802.22px;top:944.73px;white-space:pre;will-change:transform;font-size:14.5px;line-height:14.5px;letter-spacing:-0.649px;color:#ffffff;font-weight:400;">Save</div>
</body></html>
